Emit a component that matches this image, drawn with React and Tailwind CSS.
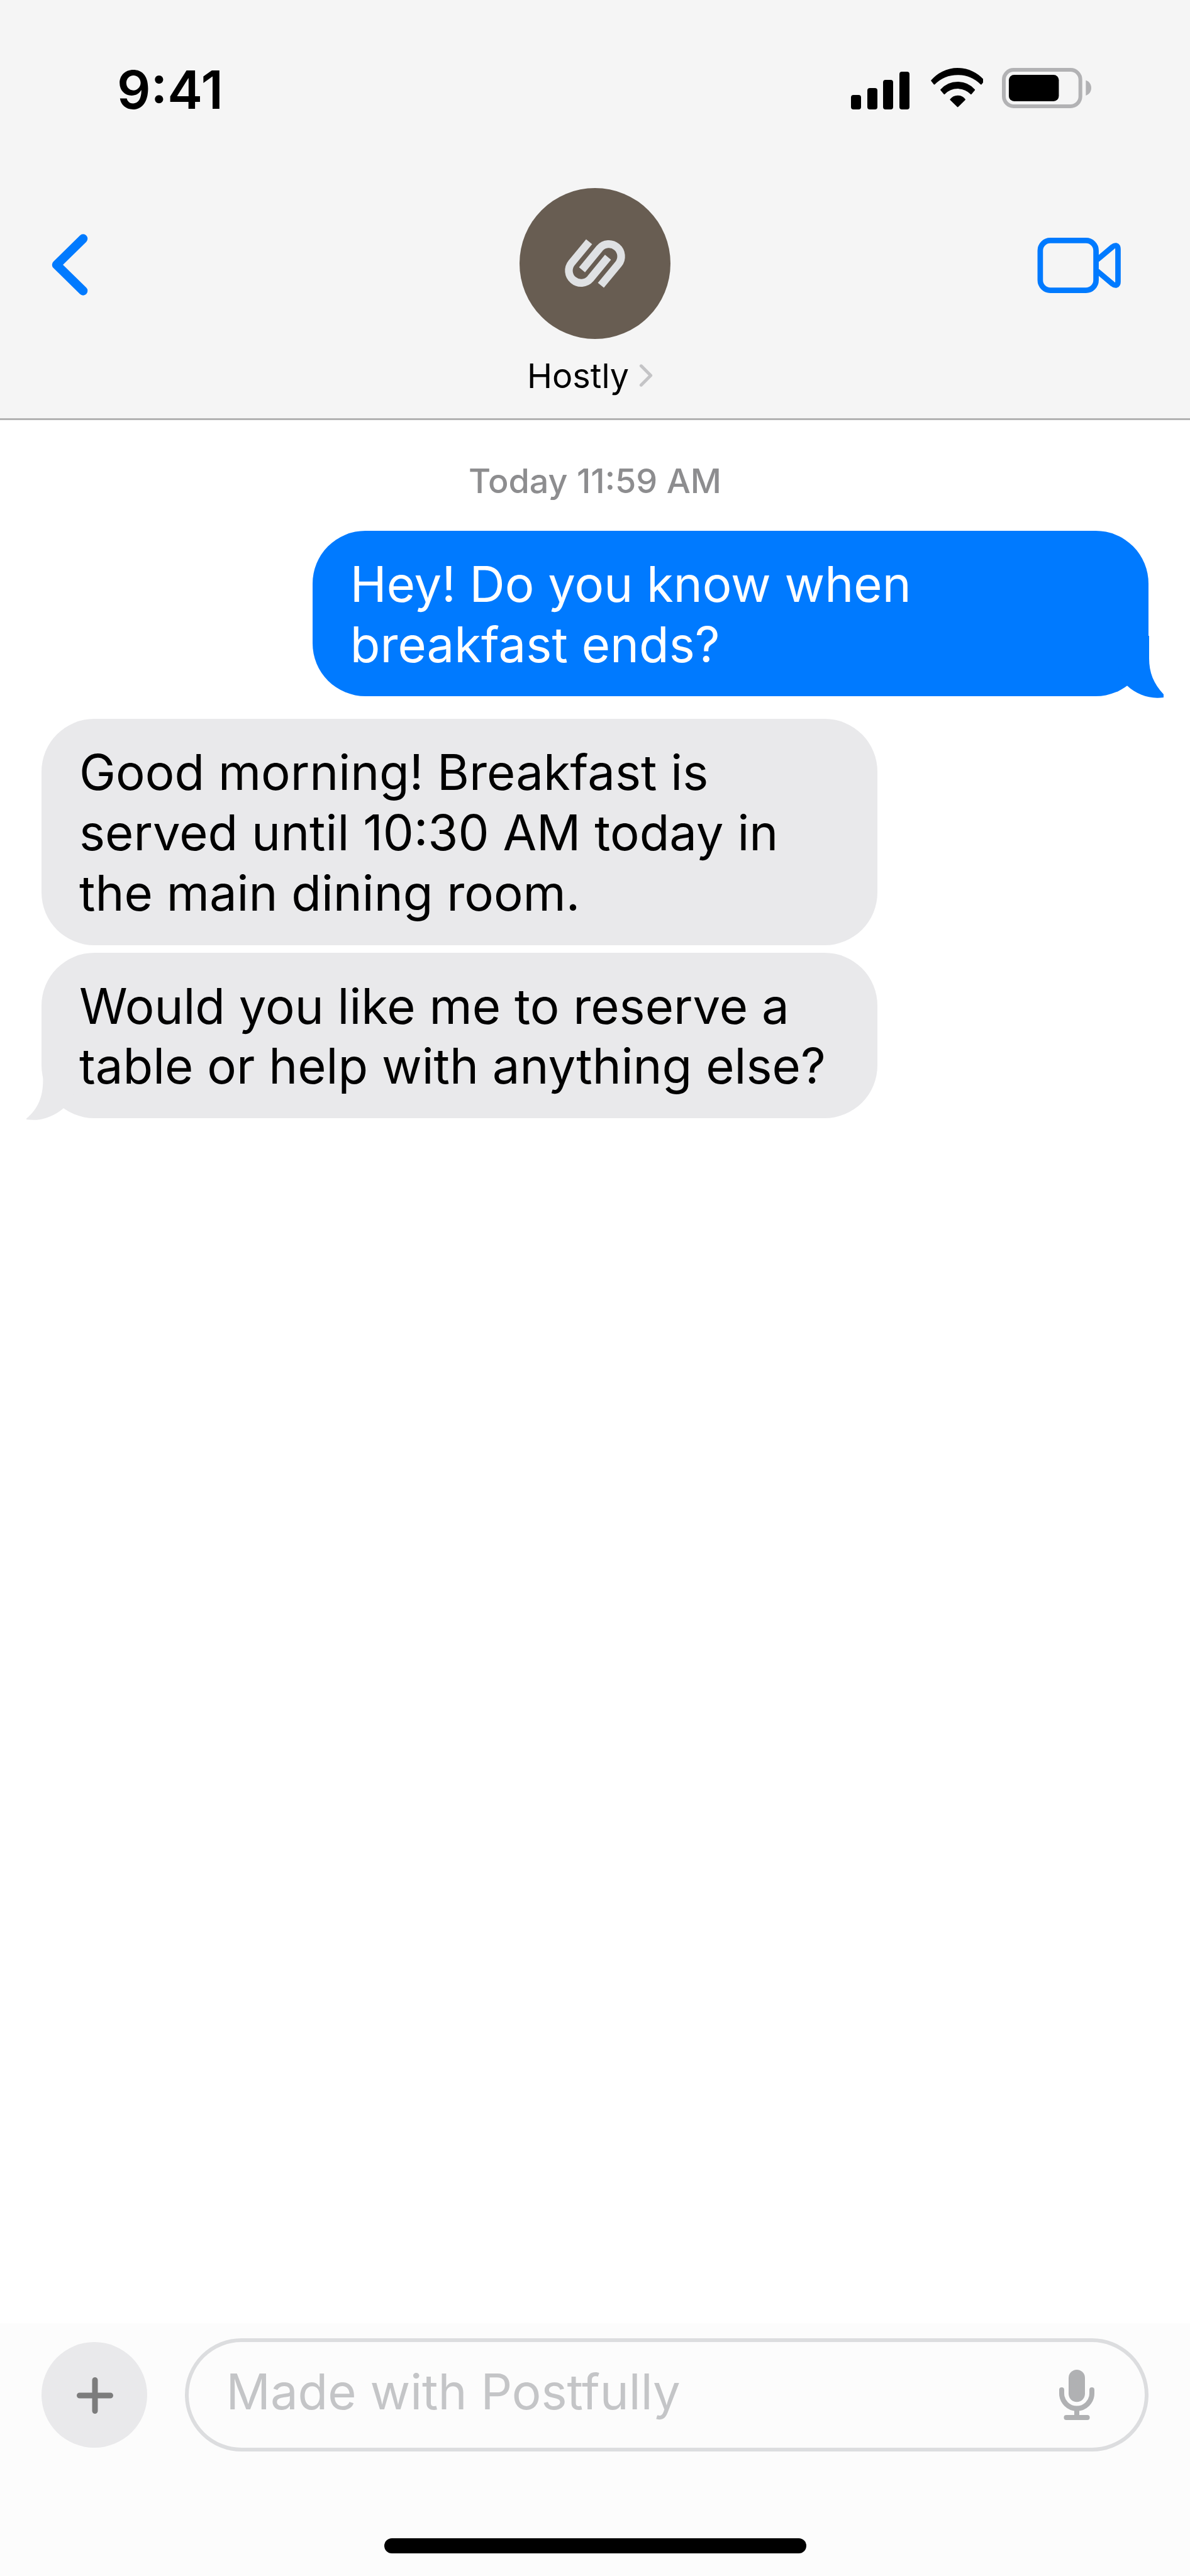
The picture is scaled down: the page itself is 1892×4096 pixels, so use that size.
import React from 'react';
import clsx from 'clsx';

const messages = [
  { id: 1, from: 'me', tail: true, text: 'Hey! Do you know when breakfast ends?' },
  { id: 2, from: 'them', tail: false, text: 'Good morning! Breakfast is served until 10:30 AM today in the main dining room.' },
  { id: 3, from: 'them', tail: true, text: 'Would you like me to reserve a table or help with anything else?' },
];

const WifiIcon = () => (
  <svg className="mb-[2px] h-[65px] w-[86px]" viewBox="30 36 258 196" fill="black" stroke="black" strokeWidth="6" strokeLinejoin="round">
    <path d="M42 100A164 164 0 0 1 292 100L279 116A159 159 0 0 0 55 116Z" />
    <path d="M87 144A107 107 0 0 1 247 144L231 163A89 89 0 0 0 103 163Z" />
    <path d="M133 191A42.5 42.5 0 0 1 201 191L167 224Z" />
  </svg>
);

const BatteryIcon = () => (
  <svg className="mb-[2px] h-[64px] w-[142px]" viewBox="378 39 427 192">
    <rect x="387" y="48" width="366" height="174" rx="47" fill="none" stroke="#b2b2b4" strokeWidth="18" />
    <rect x="411" y="72" width="239" height="126" rx="25" fill="black" />
    <path d="M779 98C796 103 805 118 805 134.500C805 151 796 166 779 171Z" fill="#b2b2b4" />
  </svg>
);

const StatusBar = () => (
  <div className="flex h-[299px] items-start justify-between pl-[186px] pr-[157px]">
    <div className="mt-[101px] text-[83.8px] leading-none font-semibold">9:41</div>
    <div className="mt-[107px] flex h-[67px] items-end">
      <div className="mr-[31px] flex items-end gap-[9.600px]">
        <div className="h-[23px] w-[16px] rounded-[4px] bg-black" />
        <div className="h-[34px] w-[16px] rounded-[4px] bg-black" />
        <div className="h-[47px] w-[16px] rounded-[4px] bg-black" />
        <div className="h-[60px] w-[16px] rounded-[4px] bg-black" />
      </div>
      <WifiIcon />
      <div className="w-[30px]" />
      <BatteryIcon />
    </div>
  </div>
);

const Avatar = () => (
  <div className="flex size-[239.500px] items-center justify-center rounded-full bg-[#685d52]">
    <svg className="h-[100px] w-[120px]" viewBox="0 0 360 300" fill="none" stroke="#dfe1e3" strokeWidth="37">
      <path d="M152 46L68.200 147.400A58.500 58.500 0 0 0 157.800 222.600L242 120" />
      <path d="M208 254L291.800 152.600A58.500 58.500 0 0 0 202.200 77.400L118 180" />
    </svg>
  </div>
);

const Header = () => (
  <header className="h-[668px] border-b-3 border-[#b2b2b2] bg-[#f5f5f5]">
    <StatusBar />
    <div className="grid grid-cols-3 items-start pl-[36px] pr-[110px]">
      <svg className="mt-[47px] size-[150px]" viewBox="0 0 512 512" fill="none" stroke="#007aff" strokeWidth="49" strokeLinecap="round" strokeLinejoin="round">
        <path d="M328 114.500L184 256l144 141.500" />
      </svg>
      <div className="ml-[74px] flex flex-col items-center">
        <Avatar />
        <div className="mt-[31px] flex items-center text-[53.900px] leading-none">
          <span>Hostly</span>
          <svg className="mb-[3px] size-[54px]" viewBox="0 0 512 512" fill="none" stroke="#c4c4c6" strokeWidth="48" strokeLinecap="round" strokeLinejoin="round">
            <path d="M184 112l144 144-144 144" />
          </svg>
        </div>
      </div>
      <svg className="mt-[78px] h-[90px] w-[133px] justify-self-end" viewBox="1652.500 378 133 90" fill="none" stroke="#007aff" strokeWidth="8.700" strokeLinejoin="round">
        <rect x="1657.400" y="383.400" width="88.700" height="79.200" rx="16" />
        <path d="M1748 414L1772.200 393.600Q1775.500 391 1778 391.600Q1781 392.500 1781 397V449Q1781 453.500 1778 454.400Q1775.500 455 1772.200 452.400L1748 432" />
      </svg>
    </div>
  </header>
);

const SentTail = () => (
  <svg className="absolute -right-[24px] -bottom-[3px] h-[99px] w-[84px]" viewBox="1770 1014 84 99" fill="#007aff">
    <path d="M1831 1014V1050C1831 1072 1838 1090 1854 1107V1112C1832 1115 1812 1108 1796 1093.300L1780 1060V1014Z" />
  </svg>
);

const ReceivedTail = () => (
  <svg className="absolute -bottom-[4px] -left-[24px] h-[96px] w-[80px]" viewBox="42 1690 80 96" fill="#e9e9eb">
    <path d="M68.400 1700V1722C68.400 1748 60 1768 42 1782.500V1784C62 1787 82 1782 101 1766.300L120 1740V1700Z" />
  </svg>
);

const Bubble = ({ from, tail, text }) => {
  const mine = from === 'me';
  return (
    <div
      className={clsx(
        'relative w-[1329.200px] rounded-[84px] px-[60px] pt-[38px] pb-[33.800px] text-[77.840px] leading-[95.800px]',
        mine ? 'mb-[36px] self-end bg-[#007aff] text-white' : 'mb-[12px] self-start bg-[#e9e9eb] text-black'
      )}
    >
      {text}
      {tail && (mine ? <SentTail /> : <ReceivedTail />)}
    </div>
  );
};

const MicIcon = () => (
  <svg className="h-[84px] w-[60px]" viewBox="0 0 60 84" fill="none" stroke="#b0b1b3" strokeWidth="8" strokeLinecap="round">
    <rect x="17" y="2" width="26" height="51.300" rx="13" fill="#b0b1b3" stroke="none" />
    <path d="M6 34v5.600a24 24 0 0 0 48 0V34" />
    <path d="M30 64v13" />
    <path d="M13.400 78h33.200" />
  </svg>
);

const Composer = () => (
  <footer className="flex h-[402px] flex-col items-center bg-[#fcfcfc] pt-[24px]">
    <div className="flex w-full items-center gap-[60px] px-[66px]">
      <div className="flex size-[167.600px] shrink-0 items-center justify-center rounded-full bg-[#e9e9eb]">
        <svg className="mt-[2px] ml-[2px] size-[60px]" viewBox="0 0 60 60" stroke="#7c7c7c" strokeWidth="9" strokeLinecap="round">
          <path d="M30 5.500v49M5.500 30h49" />
        </svg>
      </div>
      <div className="flex h-[180px] flex-1 items-center justify-between rounded-full border-6 border-[#dcdddf] pl-[60px] pr-[78px]">
        <span className="mb-[8px] text-[77.840px] leading-[95.800px] text-[#c4c5c7]">Made with Postfully</span>
        <MicIcon />
      </div>
    </div>
    {/* Home indicator */}
    <div className="mt-[138px] h-[24px] w-[671px] rounded-full bg-black" />
  </footer>
);

const App = () => {
  return (
    <div className="flex h-[4096px] w-[1892px] flex-col overflow-hidden bg-white font-['Inter',sans-serif] text-black">
      <Header />
      <main className="flex flex-1 flex-col px-[66px] pt-[70px]">
        <div className="mb-[52px] text-center text-[53.900px] leading-[54px] font-medium text-[#8d8d8f]">Today 11:59 AM</div>
        {messages.map((m) => (
          <Bubble key={m.id} {...m} />
        ))}
      </main>
      <Composer />
    </div>
  );
};

export default App;
